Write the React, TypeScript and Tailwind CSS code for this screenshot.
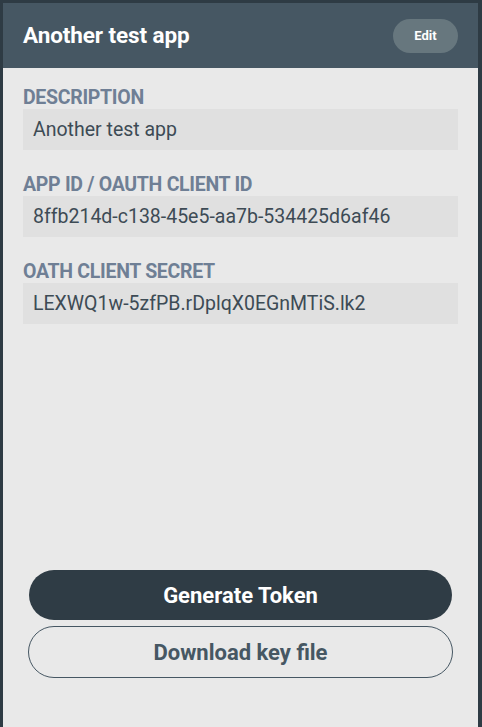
import React from "react";

type Field = {
  label: string;
  value: string;
};

const fields: Field[] = [
  { label: "Description", value: "Another test app" },
  { label: "App ID / OAuth Client ID", value: "8ffb214d-c138-45e5-aa7b-534425d6af46" },
  { label: "Oath Client Secret", value: "LEXWQ1w-5zfPB.rDplqX0EGnMTiS.lk2" },
];

const App: React.FC = () => {
  return (
    <div
      className="h-[727px] w-[482px] bg-[#2e3b44] pl-[3px] pt-[3px] pr-[4px]"
      style={{ fontFamily: "Roboto, 'Noto Sans', sans-serif" }}
    >
      <div className="h-full flex flex-col bg-[#e9e9e9]">
        <header className="h-[65px] shrink-0 bg-[#465763] flex items-center justify-between pl-[20px] pr-[20px]">
          <h1 className="text-white font-bold text-[22.5px] tracking-[-0.1px]">Another test app</h1>
          <button className="h-[34px] w-[65px] rounded-full bg-[#67777e] text-white font-bold text-[13px]">
            Edit
          </button>
        </header>

        <div className="flex flex-col px-[20px] pt-[19px] gap-[24px]">
          {fields.map((field) => (
            <div key={field.label} className="flex flex-col">
              <p className="uppercase font-bold text-[19.5px] leading-[22px] text-[#6f7f95] tracking-[-0.3px]">
                {field.label}
              </p>
              <div className="h-[41px] bg-[#e0e0e0] flex items-center px-[10px] text-[19.5px] text-[#3d4b55]">
                {field.value}
              </div>
            </div>
          ))}
        </div>

        <div className="mt-auto flex flex-col gap-[6px] px-[25px] pb-[49px]">
          <button className="mx-[1px] h-[50px] rounded-full bg-[#2f3c45] text-white font-bold text-[22px]">
            Generate Token
          </button>
          <button className="h-[52px] rounded-full border border-[#465763] text-[#465763] font-bold text-[22px]">
            Download key file
          </button>
        </div>
      </div>
    </div>
  );
};

export default App;
